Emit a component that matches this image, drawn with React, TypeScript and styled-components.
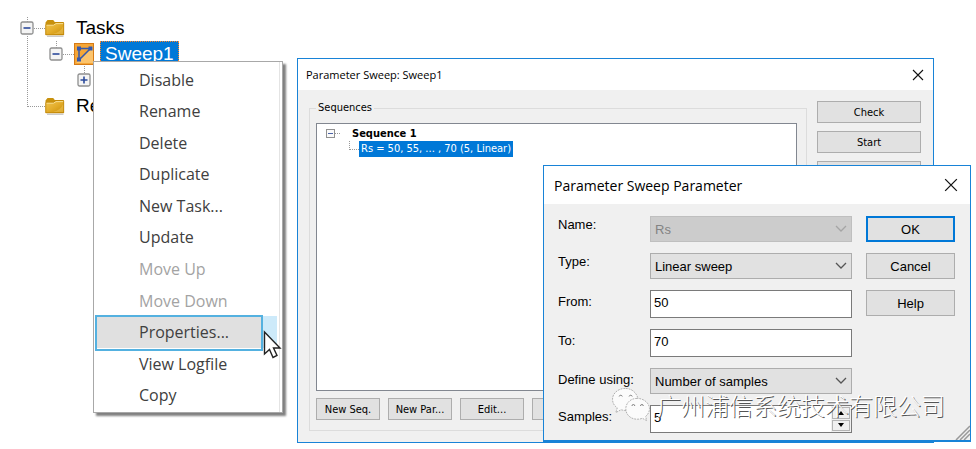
import React from "react";
import styled, { createGlobalStyle, css } from "styled-components";

const GlobalStyle = createGlobalStyle`
  * { box-sizing: border-box; }
  body { margin: 0; background: #fff; overflow: hidden; }
  button, input, select { font: inherit; color: inherit; margin: 0; }
`;

const segoe = `"Open Sans", "Noto Sans", sans-serif`;
const tahoma = `"DejaVu Sans Condensed", "DejaVu Sans", sans-serif`;
const sans = `"Liberation Sans", Arial, sans-serif`;

const Desktop = styled.main`
  position: relative;
  min-height: 449px;
  font-family: ${sans};
  color: #000;
`;

/* ---------- project tree ---------- */

const Tree = styled.ul`
  list-style: none;
  margin: 0;
  padding: 15px 0 0 20px;
  font-size: 19px;
`;

const TreeRow = styled.li<{ $indent?: number }>`
  display: flex;
  align-items: center;
  height: 26px;
  padding-left: ${(p) => p.$indent ?? 0}px;
`;

const TreeLabel = styled.span<{ $selected?: boolean }>`
  line-height: 26px;
  padding: 0 5px;
  margin-left: 6px;
  ${(p) =>
    p.$selected &&
    css`
      color: #fff;
      background: #0078d7;
      outline: 1px dotted #ff8728;
      outline-offset: -1px;
    `}
`;

const Expander = styled.button`
  display: flex;
  width: 14px;
  height: 14px;
  padding: 0;
  border: 0;
  background: none;
`;

const Dots = styled.span<{ $width: number }>`
  width: ${(p) => p.$width}px;
  border-top: 1px dotted #999;
`;

const TreeLines = styled.svg`
  position: absolute;
  left: 0;
  top: 0;
`;

function ExpanderIcon({ open }: { open: boolean }) {
  return (
    <svg width="14" height="14" viewBox="0 0 14 14">
      <rect x="1" y="1" width="12" height="12" rx="1.5" fill="#f4f4f4" stroke="#8e8f8f" strokeWidth="1.3" />
      <path d={open ? "M3.5 7h7" : "M3.5 7h7M7 3.5v7"} stroke="#2b4a9b" strokeWidth="1.6" />
    </svg>
  );
}

function FolderIcon() {
  return (
    <svg width="20" height="20" viewBox="0 0 20 20">
      <defs>
        <linearGradient id="folder" x1="0" y1="0" x2="1" y2="1">
          <stop offset="0" stopColor="#f0c552" />
          <stop offset=".5" stopColor="#e3ad2b" />
          <stop offset="1" stopColor="#c88d07" />
        </linearGradient>
      </defs>
      <path d="M2 18.3h16.5" stroke="#ccc" strokeWidth="1.4" />
      <path d="M.5 17V4.5L2.5 2h5.700l1.600 2h9v13z" fill="#c8910d" />
      <path d="M.8 16.800V6.700h7.500L10.700 5h8v11.800z" fill="url(#folder)" stroke="#bd8205" strokeWidth=".7" />
      <path d="M1.500 7.200h7L11 5.600h7.200" stroke="#f9df91" fill="none" />
      <path d="M18.200 8v8H8Q16 14 18.200 8" fill="#f1cc66" opacity=".45" />
    </svg>
  );
}

function SweepIcon() {
  return (
    <svg width="20" height="22" viewBox="0 0 20 22">
      <rect x=".5" y=".5" width="19" height="21" fill="#f5a637" stroke="#d67b16" />
      <path d="M2 20L19 3v17z" fill="#ffd48a" opacity=".65" />
      <path d="M5 5.500h12M5 5.500v11M5.500 16.500L16.500 5.500" stroke="#3558ad" strokeWidth="1.5" fill="none" />
      <path d="M3 3.500h4v4H3zM14.500 3.500h4v4h-4zM3 14.500h4v4H3z" fill="#3558ad" />
    </svg>
  );
}

/* ---------- context menu ---------- */

const Menu = styled.div`
  position: absolute;
  left: 93px;
  top: 61px;
  width: 190px;
  min-height: 352px;
  padding: 2px 5px 1px 2px;
  display: grid;
  grid-auto-rows: 1fr;
  background: #fff;
  border: 1px solid #a8a8a8;
  box-shadow: inset -2px 0 0 #fff, inset -3px 0 0 #e4e4e4, 3px 3px 2px #808080;
`;

const MenuItem = styled.button<{ $active?: boolean }>`
  border: 0;
  padding: 0 0 0 43px;
  text-align: left;
  font-family: ${segoe};
  font-size: 16px;
  background: none;
  color: #404040;
  &:disabled { color: #a3a3a3; }
  ${(p) =>
    p.$active &&
    css`
      position: relative;
      background: linear-gradient(90deg, #e0e0e0 167px, #cdeafa 167px);
      &::after {
        content: "";
        position: absolute;
        inset: -1px 14px -3px -1px;
        border: 2px solid #54b1e0;
      }
    `}
`;

const Pointer = styled.svg`
  position: absolute;
  left: 263px;
  top: 330px;
`;

const menuItems: { label: string; disabled?: boolean; active?: boolean }[] = [
  { label: "Disable" },
  { label: "Rename" },
  { label: "Delete" },
  { label: "Duplicate" },
  { label: "New Task..." },
  { label: "Update" },
  { label: "Move Up", disabled: true },
  { label: "Move Down", disabled: true },
  { label: "Properties...", active: true },
  { label: "View Logfile" },
  { label: "Copy" },
];

/* ---------- shared window parts ---------- */

const Window = styled.section`
  position: absolute;
  background: #f0f0f0;
  border: 1px solid #1883d7;
`;

const TitleBar = styled.header<{ $large?: boolean }>`
  display: flex;
  align-items: center;
  justify-content: space-between;
  height: ${(p) => (p.$large ? 38 : 31)}px;
  padding: 0 ${(p) => (p.$large ? 12 : 9)}px 0 ${(p) => (p.$large ? 10 : 8)}px;
  background: #fff;
  font-family: ${segoe};
  font-size: ${(p) => (p.$large ? 14 : 11)}px;
`;

const WindowTitle = styled.h2`
  margin: 0;
  font-size: inherit;
  font-weight: 400;
`;

const CloseButton = styled.button`
  display: flex;
  padding: 0;
  border: 0;
  background: none;
`;

function CloseIcon({ size }: { size: number }) {
  return (
    <svg width={size} height={size} viewBox="0 0 12 12">
      <path d="M1 1l10 10M11 1L1 11" stroke="#111" strokeWidth="1.1" />
    </svg>
  );
}

const PushButton = styled.button<{ $height: number; $primary?: boolean }>`
  height: ${(p) => p.$height}px;
  padding: 0;
  text-align: center;
  white-space: nowrap;
  background: #e1e1e1;
  border: ${(p) => (p.$primary ? "2px solid #0078d7" : "1px solid #adadad")};
`;

/* ---------- sweep window ---------- */

const SweepWindow = styled(Window)`
  left: 297px;
  right: 42px;
  top: 58px;
  font-family: ${tahoma};
  font-size: 11px;
`;

const SweepBody = styled.div`
  display: grid;
  grid-template-columns: 1fr 104px;
  column-gap: 10px;
  padding: 11px 12px 11px 11px;
`;

const Group = styled.fieldset`
  min-width: 0;
  margin: 0;
  padding: 8px 9px 10px 6px;
  border: 1px solid #dcdcdc;
`;

const Legend = styled.legend`
  padding: 0 2px;
  line-height: 14px;
`;

const SequenceList = styled.ul`
  list-style: none;
  margin: 0 0 7px;
  padding: 1px 0 0 9px;
  min-height: 268px;
  background: #fff;
  border: 1px solid #828790;
`;

const SequenceRow = styled.li<{ $child?: boolean }>`
  display: flex;
  align-items: center;
  height: 16px;
  font-weight: ${(p) => (p.$child ? 400 : 700)};
  padding-left: ${(p) => (p.$child ? 23 : 0)}px;
`;

const SequenceName = styled.span`
  margin-left: 12px;
`;

const SequenceValue = styled.span`
  padding: 0 2px;
  line-height: 16px;
  color: #fff;
  background: #0078d7;
`;

const Elbow = styled.span`
  align-self: flex-start;
  width: 10px;
  height: 9px;
  border-left: 1px dotted #999;
  border-bottom: 1px dotted #999;
`;

const ButtonRow = styled.div`
  display: grid;
  grid-template-columns: repeat(4, 64px);
  column-gap: 8px;
`;

const SideButtons = styled.div`
  display: flex;
  flex-direction: column;
  gap: 8px;
`;

/* ---------- parameter window ---------- */

const ParameterWindow = styled(Window)`
  left: 543px;
  right: 5px;
  top: 165px;
  border-bottom-width: 2px;
  font-size: 13px;
`;

const ParameterBody = styled.div`
  display: grid;
  grid-template-columns: 1fr 89px;
  column-gap: 14px;
  padding: 12px 15px 7px 14px;
`;

const Fields = styled.form`
  display: grid;
  grid-template-columns: 92px 1fr;
  row-gap: 11px;
`;

const FieldLabel = styled.label<{ $tall?: boolean }>`
  line-height: ${(p) => (p.$tall ? 24 : 18)}px;
  white-space: nowrap;
`;

const SelectBox = styled.div`
  position: relative;
  display: grid;
  svg {
    position: absolute;
    right: 5px;
    top: 9px;
    pointer-events: none;
  }
`;

const Select = styled.select`
  appearance: none;
  height: 26px;
  padding: 0 20px 0 4px;
  border: 1px solid #adadad;
  border-radius: 0;
  background: #e1e1e1;
  &:disabled {
    background: #ccc;
    border-color: #bfbfbf;
    color: #838383;
    opacity: 1;
  }
`;

const inputBox = css`
  height: 28px;
  border: 1px solid #7a7a7a;
  background: #fff;
`;

const TextInput = styled.input`
  ${inputBox}
  min-width: 0;
  padding: 0 3px 4px;
`;

const SpinBox = styled.div`
  ${inputBox}
  display: grid;
  grid-template-columns: 1fr 20px;
`;

const SpinInput = styled.input`
  min-width: 0;
  border: 0;
  padding: 0 3px 4px;
  background: none;
`;

const SpinButtons = styled.div`
  display: grid;
  grid-template-rows: 1fr 1fr;
  gap: 1px;
  padding: 1px;
  background: #f0f0f0;
`;

const SpinButton = styled.button`
  display: flex;
  align-items: center;
  justify-content: center;
  padding: 0;
  border: 1px solid #b4b4b4;
  background: #f0f0f0;
`;

const DialogButtons = styled.div`
  display: flex;
  flex-direction: column;
  gap: 11px;
`;

const Grip = styled.svg`
  position: absolute;
  right: 0;
  bottom: 0;
`;

function Dropdown({ id, value, disabled }: { id: string; value: string; disabled?: boolean }) {
  return (
    <SelectBox>
      <Select id={id} disabled={disabled} defaultValue={value}>
        <option>{value}</option>
      </Select>
      <svg width="12" height="8" viewBox="0 0 12 8">
        <path d="M1 1l5 5 5-5" fill="none" stroke={disabled ? "#a5a5a5" : "#555"} strokeWidth="1.3" />
      </svg>
    </SelectBox>
  );
}

/* ---------- watermark ---------- */

const Watermark = styled.div`
  position: absolute;
  right: 31px;
  top: 386px;
  display: flex;
  align-items: center;
  gap: 6px;
  font-family: "Noto Sans CJK SC", sans-serif;
  font-weight: 300;
  font-size: 24px;
  line-height: 38px;
  white-space: nowrap;
  color: #fff;
  text-shadow: 1px 1px 0 #555;
  pointer-events: none;
`;

function ChatIcon() {
  return (
    <svg width="40" height="36" viewBox="0 0 42 38">
      <g fill="#fbfbfb" stroke="#9b9b9b" strokeWidth=".8" strokeDasharray="2 1">
        <path d="M15 1.500C7.500 1.500 1.500 6.500 1.500 13c0 4 2 7 5 9l-1.500 5 5.500-3q4 1.200 8 .5L28 11C26 5 21 1.500 15 1.500z" />
        <path d="M27.500 12C20.500 12 15.500 17 15.500 23s5 11 12 11q3 0 5.500-1l4.500 2.500-1-4.500c2.500-2 4-5 4-8C40.500 17 34.500 12 27.500 12z" />
      </g>
      <g fill="none" stroke="#777">
        <path d="M8.500 10a1.700 1.700 0 0 1 3.300 0M19 10a1.700 1.700 0 0 1 3.300 0M22 20a1.500 1.500 0 0 1 3 0M31 20a1.500 1.500 0 0 1 3 0" />
      </g>
    </svg>
  );
}

export default function App() {
  return (
    <Desktop>
      <GlobalStyle />
      <TreeLines width="90" height="110" viewBox="0 0 90 110" fill="none" stroke="#999" strokeDasharray="1 1">
        <path d="M27.500 17v6M27.500 36v71M56.500 41v7M84.500 66v8" />
      </TreeLines>
      <Tree>
        <TreeRow>
          <Expander aria-label="Collapse Tasks"><ExpanderIcon open /></Expander>
          <Dots $width={11} />
          <FolderIcon />
          <TreeLabel>Tasks</TreeLabel>
        </TreeRow>
        <TreeRow $indent={29}>
          <Expander aria-label="Collapse Sweep1"><ExpanderIcon open /></Expander>
          <Dots $width={11} />
          <SweepIcon />
          <TreeLabel $selected>Sweep1</TreeLabel>
        </TreeRow>
        <TreeRow $indent={57}>
          <Expander aria-label="Expand item"><ExpanderIcon open={false} /></Expander>
        </TreeRow>
        <TreeRow $indent={8}>
          <Dots $width={17} />
          <FolderIcon />
          <TreeLabel>Results</TreeLabel>
        </TreeRow>
      </Tree>

      <SweepWindow aria-label="Parameter Sweep: Sweep1">
        <TitleBar>
          <WindowTitle>Parameter Sweep: Sweep1</WindowTitle>
          <CloseButton aria-label="Close"><CloseIcon size={12} /></CloseButton>
        </TitleBar>
        <SweepBody>
          <Group>
            <Legend>Sequences</Legend>
            <SequenceList>
              <SequenceRow>
                <svg width="9" height="9" viewBox="0 0 9 9">
                  <rect x=".5" y=".5" width="8" height="8" fill="#fafafa" stroke="#919191" />
                  <path d="M2 4.500h5" stroke="#4b63a7" />
                </svg>
                <Dots $width={5} />
                <SequenceName>Sequence 1</SequenceName>
              </SequenceRow>
              <SequenceRow $child>
                <Elbow />
                <SequenceValue>Rs = 50, 55, ... , 70 (5, Linear)</SequenceValue>
              </SequenceRow>
            </SequenceList>
            <ButtonRow>
              <PushButton $height={22}>New Seq.</PushButton>
              <PushButton $height={22}>New Par...</PushButton>
              <PushButton $height={22}>Edit...</PushButton>
              <PushButton $height={22} aria-label="Delete" />
            </ButtonRow>
          </Group>
          <SideButtons>
            <PushButton $height={22}>Check</PushButton>
            <PushButton $height={22}>Start</PushButton>
            <PushButton $height={22} aria-label="Close" />
          </SideButtons>
        </SweepBody>
      </SweepWindow>

      <Menu>
        {menuItems.map((item) => (
          <MenuItem key={item.label} disabled={item.disabled} $active={item.active}>
            {item.label}
          </MenuItem>
        ))}
      </Menu>
      <Pointer width="20" height="30" viewBox="0 0 20 30">
        <path d="M1.500 2v22l5-4.500 3.500 8 4-2-3.500-7.500h6.500z" fill="#fff" stroke="#222" strokeWidth="1.400" />
      </Pointer>

      <ParameterWindow aria-label="Parameter Sweep Parameter">
        <TitleBar $large>
          <WindowTitle>Parameter Sweep Parameter</WindowTitle>
          <CloseButton aria-label="Close"><CloseIcon size={14} /></CloseButton>
        </TitleBar>
        <ParameterBody>
          <Fields>
            <FieldLabel htmlFor="name">Name:</FieldLabel>
            <Dropdown id="name" value="Rs" disabled />
            <FieldLabel htmlFor="type">Type:</FieldLabel>
            <Dropdown id="type" value="Linear sweep" />
            <FieldLabel htmlFor="from" $tall>From:</FieldLabel>
            <TextInput id="from" defaultValue="50" />
            <FieldLabel htmlFor="to" $tall>To:</FieldLabel>
            <TextInput id="to" defaultValue="70" />
            <FieldLabel htmlFor="using" $tall>Define using:</FieldLabel>
            <Dropdown id="using" value="Number of samples" />
            <FieldLabel htmlFor="samples" $tall>Samples:</FieldLabel>
            <SpinBox>
              <SpinInput id="samples" defaultValue="5" />
              <SpinButtons>
                <SpinButton type="button" aria-label="Increase">
                  <svg width="6" height="4" viewBox="0 0 6 4"><path d="M0 4l3-4 3 4z" /></svg>
                </SpinButton>
                <SpinButton type="button" aria-label="Decrease">
                  <svg width="6" height="4" viewBox="0 0 6 4"><path d="M0 0l3 4 3-4z" /></svg>
                </SpinButton>
              </SpinButtons>
            </SpinBox>
          </Fields>
          <DialogButtons>
            <PushButton $height={26} $primary>OK</PushButton>
            <PushButton $height={26}>Cancel</PushButton>
            <PushButton $height={26}>Help</PushButton>
          </DialogButtons>
        </ParameterBody>
        <Grip width="15" height="15" viewBox="0 0 15 15">
          <path d="M1 15L15 1M5 15L15 5M9 15l6-6" stroke="#999" strokeWidth="1.500" />
        </Grip>
      </ParameterWindow>

      <Watermark>
        <ChatIcon />
        <span>广州浦信系统技术有限公司</span>
      </Watermark>
    </Desktop>
  );
}
